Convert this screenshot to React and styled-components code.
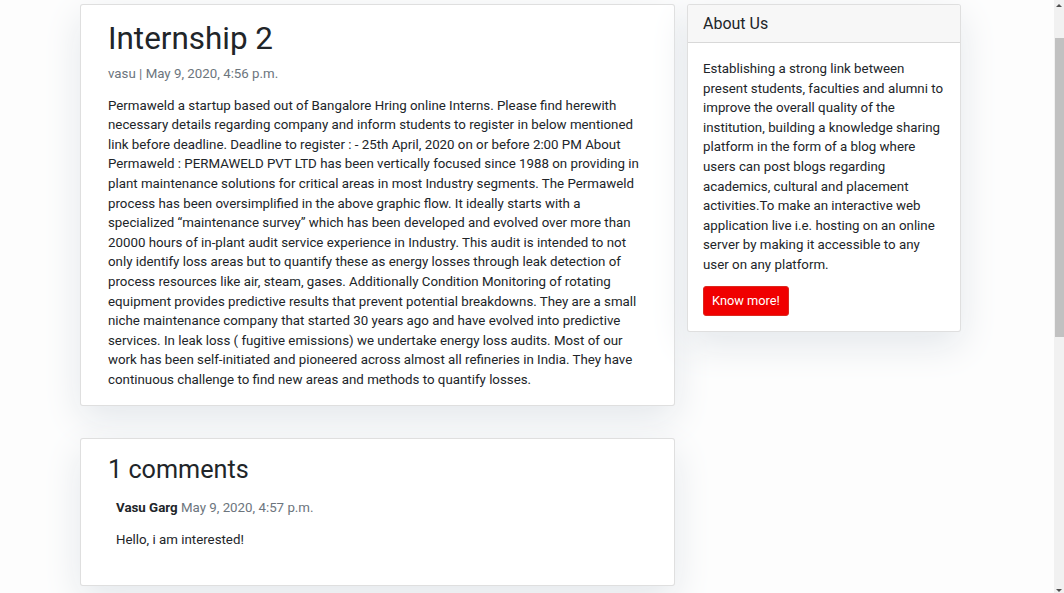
import styled, { createGlobalStyle } from 'styled-components'

const GlobalStyle = createGlobalStyle`
	* {
		box-sizing: border-box;
	}
	html, body {
		margin: 0;
		height: 593px;
		overflow: hidden;
	}
	body {
		font-family: Roboto, 'Liberation Sans', sans-serif;
		font-size: 13.3px;
		line-height: 19.6px;
		color: #212529;
		background-color: #fdfdfd;
	}
`

const post = {
	title: 'Internship 2',
	author: 'vasu',
	created: 'May 9, 2020, 4:56 p.m.',
	content:
		'Permaweld a startup based out of Bangalore Hring online Interns. Please find herewith necessary details regarding company and inform students to register in below mentioned link before deadline. Deadline to register : - 25th April, 2020 on or before 2:00 PM About Permaweld : PERMAWELD PVT LTD has been vertically focused since 1988 on providing in plant maintenance solutions for critical areas in most Industry segments. The Permaweld process has been oversimplified in the above graphic flow. It ideally starts with a specialized \u201cmaintenance survey\u201d which has been developed and evolved over more than 20000 hours of in-plant audit service experience in Industry. This audit is intended to not only identify loss areas but to quantify these as energy losses through leak detection of process resources like air, steam, gases. Additionally Condition Monitoring of rotating equipment provides predictive results that prevent potential breakdowns. They are a small niche maintenance company that started 30 years ago and have evolved into predictive services. In leak loss ( fugitive emissions) we undertake energy loss audits. Most of our work has been self-initiated and pioneered across almost all refineries in India. They have continuous challenge to find new areas and methods to quantify losses.',
}

const comments = [
	{ name: 'Vasu Garg', created: 'May 9, 2020, 4:57 p.m.', body: 'Hello, i am interested!' },
]

export default function App() {
	return (
		<>
			<GlobalStyle />
			<Page>
				<MainColumn>
					<Card>
						<CardBody $bottom={3}>
							<Title>{post.title}</Title>
							<Meta>
								{post.author} | {post.created}
							</Meta>
							<Text>{post.content}</Text>
						</CardBody>
					</Card>
					<Card>
						<CardBody $bottom={15}>
							<CommentsTitle>{comments.length} comments</CommentsTitle>
							{comments.map((c) => (
								<Comment key={c.name}>
									<CommentAuthor>
										{c.name} <Muted>{c.created}</Muted>
									</CommentAuthor>
									<Text>{c.body}</Text>
								</Comment>
							))}
						</CardBody>
					</Card>
				</MainColumn>
				<Sidebar>
					<SideCard>
						<CardHeader>About Us</CardHeader>
						<SideBody>
							<Text $mb={11}>
								Establishing a strong link between present students, faculties and alumni to improve the
								overall quality of the institution, building a knowledge sharing platform in the form of a
								blog where users can post blogs regarding academics, cultural and placement activities.To
								make an interactive web application live i.e. hosting on an online server by making it
								accessible to any user on any platform.
							</Text>
							<Button>Know more!</Button>
						</SideBody>
					</SideCard>
				</Sidebar>
			</Page>
			<Scrollbar>
				<ArrowUp />
				<Thumb />
				<ArrowDown />
			</Scrollbar>
		</>
	)
}

const Page = styled.div`
	display: flex;
	align-items: flex-start;
	gap: 12px;
	padding: 4px 0 0 80px;
	width: 1054px;
`

const MainColumn = styled.div`
	width: 595px;
	display: flex;
	flex-direction: column;
	gap: 32px;
`

const Card = styled.div`
	background: #fff;
	border: 1px solid rgba(0, 0, 0, 0.125);
	border-radius: 3px;
	box-shadow: 0 13px 38px #e3e7eb;
`

const CardBody = styled.div`
	padding: 15px 27px ${(p) => p.$bottom}px;
`

const Title = styled.h1`
	margin: 0 0 6px;
	font-size: 31.4px;
	font-weight: 400;
	line-height: 38px;
	color: #212529;
`

const Meta = styled.p`
	margin: 0 0 12px;
	color: #6c757d;
`

const Text = styled.p`
	margin: 0 0 ${(p) => p.$mb ?? 12}px;
`

const CommentsTitle = styled.h2`
	margin: 0 0 5px;
	font-size: 25.2px;
	font-weight: 400;
	line-height: 31px;
	color: #212529;
`

const Comment = styled.div`
	padding: 8px;
`

const CommentAuthor = styled.p`
	margin: 0 0 13px;
	font-weight: 700;
`

const Muted = styled.span`
	font-weight: 400;
	color: #6c757d;
`

const Sidebar = styled.div`
	width: 274px;
`

const SideCard = styled(Card)`
	overflow: hidden;
`

const CardHeader = styled.h5`
	margin: 0;
	padding: 9px 15px;
	font-size: 16px;
	font-weight: 400;
	line-height: 19px;
	background: #f7f7f7;
	border-bottom: 1px solid rgba(0, 0, 0, 0.125);
`

const SideBody = styled.div`
	padding: 16px 14px 15px 15px;
`

const Button = styled.button`
	display: inline-block;
	padding: 4.8px 8px;
	font-family: inherit;
	font-size: 12.8px;
	line-height: 19.2px;
	color: #fff;
	background-color: #f00000;
	border: 1px solid #dc281e;
	border-radius: 3px;
`

const Scrollbar = styled.div`
	position: fixed;
	top: 0;
	right: 0;
	width: 10px;
	height: 593px;
	background: #f1f1f1;
`

const Thumb = styled.div`
	position: absolute;
	top: 38px;
	left: 1px;
	right: 0;
	height: 299px;
	background: #c1c1c1;
`

const ArrowUp = styled.div`
	position: absolute;
	top: 4px;
	left: 2px;
	width: 0;
	height: 0;
	border-left: 3px solid transparent;
	border-right: 3px solid transparent;
	border-bottom: 3px solid #505050;
`

const ArrowDown = styled(ArrowUp)`
	top: auto;
	bottom: 1px;
	border-bottom: none;
	border-top: 3px solid #505050;
`
